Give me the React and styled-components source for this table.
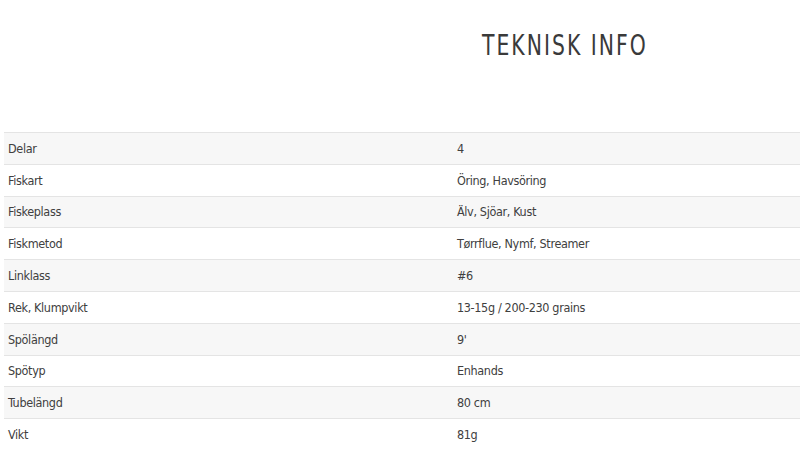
import React from 'react';
import styled, { createGlobalStyle } from 'styled-components';

const specs = [
  ['Delar', '4'],
  ['Fiskart', 'Öring, Havsöring'],
  ['Fiskeplass', 'Älv, Sjöar, Kust'],
  ['Fiskmetod', 'Tørrflue, Nymf, Streamer'],
  ['Linklass', '#6'],
  ['Rek, Klumpvikt', '13-15g / 200-230 grains'],
  ['Spölängd', "9'"],
  ['Spötyp', 'Enhands'],
  ['Tubelängd', '80 cm'],
  ['Vikt', '81g'],
];

const GlobalStyle = createGlobalStyle`
  html, body {
    margin: 0;
    padding: 0;
    background: #fff;
    overflow: hidden;
  }
  body {
    font-family: "DejaVu Sans Condensed", "DejaVu Sans", sans-serif;
    font-stretch: condensed;
  }
`;

const Page = styled.div`
  width: 800px;
  height: 451px;
  overflow: hidden;
`;

const Header = styled.div`
  display: flex;
  height: 132px;
  padding: 28px 0 0 482px;
  box-sizing: border-box;
`;

const Title = styled.h2`
  margin: 0;
  font-weight: 200;
  font-size: 29px;
  line-height: 34px;
  letter-spacing: 2.6px;
  color: #3a3a3a;
  transform: scaleX(0.78);
  transform-origin: left center;
`;

const Table = styled.div`
  margin-left: 4px;
  width: 820px;
`;

const Row = styled.div`
  display: grid;
  grid-template-columns: 445px 1fr;
  height: 31.8px;
  box-sizing: border-box;
  border-top: 1px solid #e4e4e4;
  background: ${(p) => (p.$striped ? '#f7f7f7' : '#ffffff')};
  align-items: center;
`;

const Cell = styled.div`
  padding-left: ${(p) => (p.$value ? '8px' : '4px')};
  font-size: 12.5px;
  letter-spacing: -0.35px;
  color: #404040;
  white-space: nowrap;
`;

export default function App() {
  return (
    <Page>
      <GlobalStyle />
      <Header>
        <Title>TEKNISK INFO</Title>
      </Header>
      <Table>
        {specs.map(([label, value], i) => (
          <Row key={label} $striped={i % 2 === 0}>
            <Cell>{label}</Cell>
            <Cell $value>{value}</Cell>
          </Row>
        ))}
      </Table>
    </Page>
  );
}
